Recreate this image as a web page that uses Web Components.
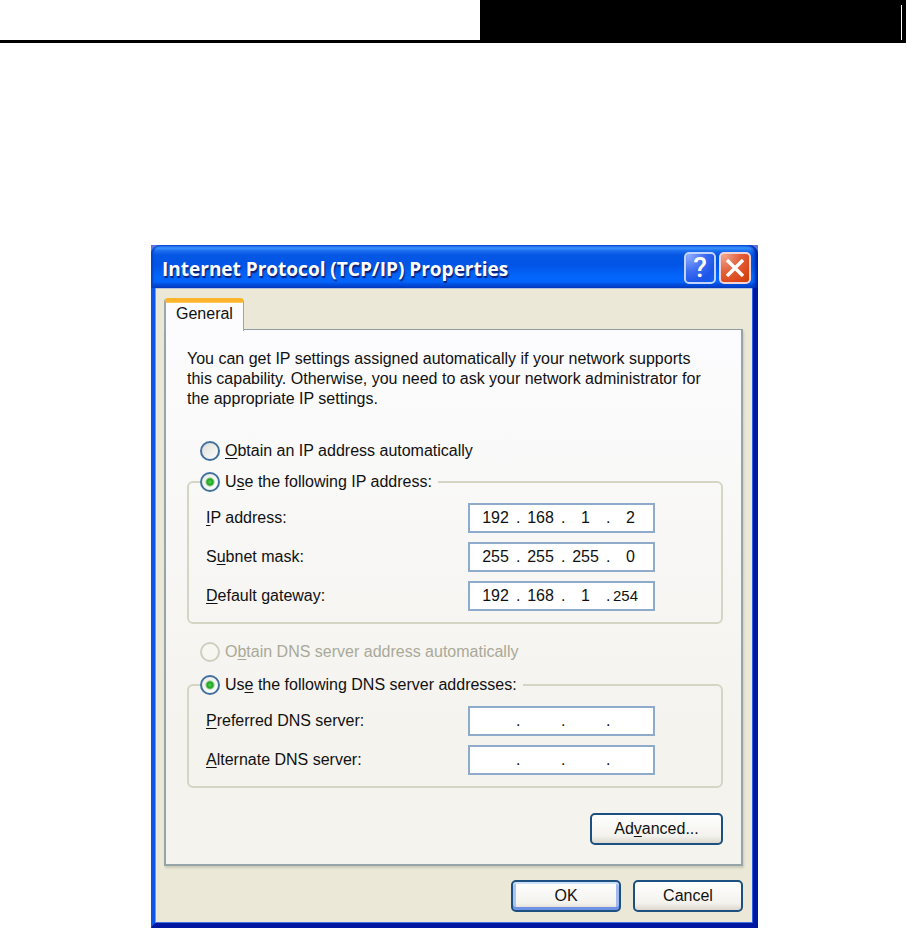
<!DOCTYPE html>
<html lang="en">
<head>
<meta charset="utf-8">
<title>Internet Protocol (TCP/IP) Properties</title>
<style>
  body {
    margin: 0;
    background: #fff;
    color: #111;
    font: 16px/20px "Liberation Sans", Arial, sans-serif;
  }
  main {
    padding: 202px 148px 0 151px;
  }
  p {
    margin: 0 0 32px 21px;
  }
  u {
    text-underline-offset: 2px;
  }
</style>
</head>
<body>
<page-header></page-header>
<main>
  <xp-dialog>
    <span slot="title">Internet Protocol (TCP/IP) Properties</span>
    <xp-tab-panel>
      <span slot="tab">General</span>
      <p>You can get IP settings assigned automatically if your network supports<br>this capability. Otherwise, you need to ask your network administrator for<br>the appropriate IP settings.</p>
      <xp-radio group="ip" class="loose"><u>O</u>btain an IP address automatically</xp-radio>
      <xp-group>
        <xp-radio slot="legend" group="ip" checked>U<u>s</u>e the following IP address:</xp-radio>
        <ip-field value="192.168.1.2"><u>I</u>P address:</ip-field>
        <ip-field value="255.255.255.0">S<u>u</u>bnet mask:</ip-field>
        <ip-field value="192.168.1.254"><u>D</u>efault gateway:</ip-field>
      </xp-group>
      <xp-radio group="dns" class="loose" disabled>O<u>b</u>tain DNS server address automatically</xp-radio>
      <xp-group>
        <xp-radio slot="legend" group="dns" checked>Us<u>e</u> the following DNS server addresses:</xp-radio>
        <ip-field value="..."><u>P</u>referred DNS server:</ip-field>
        <ip-field value="..."><u>A</u>lternate DNS server:</ip-field>
      </xp-group>
      <xp-button slot="actions" wide>Ad<u>v</u>anced...</xp-button>
    </xp-tab-panel>
    <xp-button slot="buttons" primary>OK</xp-button>
    <xp-button slot="buttons">Cancel</xp-button>
  </xp-dialog>
</main>

<script>
class PageHeader extends HTMLElement {
  constructor() {
    super();
    this.attachShadow({ mode: 'open' });
    this.shadowRoot.innerHTML = `
      <style>
        :host {
          display: grid;
          grid-template-columns: 53fr 47fr;
          border-bottom: 3px solid #000;
        }
        .band {
          display: flex;
          justify-content: flex-end;
          height: 35px;
          padding: 5px 4px 0 0;
          background: #000;
        }
        .mark {
          width: 1px;
          background: #fff;
        }
      </style>
      <div></div>
      <div class="band"><div class="mark"></div></div>
    `;
  }
}

class XpDialog extends HTMLElement {
  constructor() {
    super();
    this.attachShadow({ mode: 'open' });
    this.shadowRoot.innerHTML = `
      <style>
        :host {
          display: block;
          background: #5f74dc;
        }
        header {
          display: flex;
          align-items: center;
          gap: 3px;
          height: 43px;
          padding: 3px 7px 0 11px;
          box-sizing: border-box;
          border-radius: 9px 9px 0 0;
          background: linear-gradient(#0a4fd8 0, #3a93ff 3px, #1c6cf0 6px, #0557e4 10px, #0254e6 20px, #0366fd 32px, #0365fb 37px, #0150e0 39px, #003dc0 43px);
          box-shadow: inset 3px 0 2px -1px #0443cc, inset -4px 0 3px -1px #0022a8;
        }
        h1 {
          flex: 1;
          margin: 0;
          padding-top: 2px;
          color: #fff;
          font: bold 19px/24px "Open Sans", "Noto Sans", sans-serif;
          text-shadow: 1px 2px 1px #0a1f78;
        }
        header button {
          display: flex;
          align-items: center;
          justify-content: center;
          width: 32px;
          height: 32px;
          padding: 0;
          border: 2px solid #c3d3fa;
          border-radius: 5px;
          color: #fff;
          font: 500 28px/28px Roboto, sans-serif;
        }
        .help {
          background: radial-gradient(circle at 10% 5%, #8caaff, #3d6bf0 45%, #1c55e8 75%, #0d62f5);
        }
        .close {
          background: radial-gradient(circle at 10% 5%, #f2a48c, #e2603c 45%, #dc4a1c 75%, #c83a08);
          border-color: #f0d4d8;
        }
        .body {
          padding: 10px 10px 11px 9px;
          background: #ebe8d7;
          border: solid;
          border-width: 0 5px 5px 4px;
          border-color: #0831d9 #0018a0 #0018a0 #0b57e8;
          box-shadow: inset 1px 0 #7896d8, inset -1px 0 #2b62e4, inset 0 -1px #3f74de, inset 0 1px #b8c4dc;
        }
        footer {
          display: flex;
          justify-content: flex-end;
          gap: 12px;
          padding-top: 14px;
        }
      </style>
      <header>
        <h1><slot name="title"></slot></h1>
        <button class="help" type="button" aria-label="Help">?</button>
        <button class="close" type="button" aria-label="Close">
          <svg width="18" height="18" viewBox="0 0 18 18" fill="none" stroke="#fff" stroke-width="3.4"><path d="M1 1l16 16M17 1L1 17"/></svg>
        </button>
      </header>
      <div class="body">
        <slot></slot>
        <footer><slot name="buttons"></slot></footer>
      </div>
    `;
  }
}

class XpTabPanel extends HTMLElement {
  constructor() {
    super();
    this.attachShadow({ mode: 'open' });
    this.shadowRoot.innerHTML = `
      <style>
        :host {
          display: block;
        }
        .tab {
          position: relative;
          z-index: 1;
          width: max-content;
          padding: 2px 10px 7px;
          margin-bottom: -2px;
          background: #fcfcfe;
          border: 1px solid #9aa8ac;
          border-left-width: 2px;
          border-top: 4px solid #fdb52e;
          border-bottom: 0;
          border-radius: 4px 4px 0 0;
          box-shadow: inset 0 1px #fdc95e;
        }
        .panel {
          padding: 18px 18px 19px 0;
          border: 2px solid #98a5a8;
          border-top: 1px solid #8f9c9f;
          background: linear-gradient(#fcfcfe, #f4f3ee 75%, #f4f3ee);
          box-shadow: 1px 2px 2px #cbc9b8;
        }
        .actions {
          display: flex;
          justify-content: flex-end;
          padding-top: 25px;
        }
        ::slotted(p) {
          padding-top: 1px;
        }
        ::slotted(.loose) {
          margin-left: 34px;
        }
        ::slotted(xp-group) {
          margin: 11px 0 18px 21px;
        }
        ::slotted(xp-group:last-of-type) {
          margin: 13px 0 0 21px;
        }
      </style>
      <div class="tab"><slot name="tab"></slot></div>
      <div class="panel">
        <slot></slot>
        <div class="actions"><slot name="actions"></slot></div>
      </div>
    `;
  }
}

class XpGroup extends HTMLElement {
  constructor() {
    super();
    this.attachShadow({ mode: 'open' });
    this.shadowRoot.innerHTML = `
      <style>
        :host {
          display: block;
        }
        fieldset {
          margin: 0;
          min-width: 0;
          padding: 11px 66px 11px 17px;
          border: 2px solid #d4d5c3;
          border-radius: 6px;
        }
        legend {
          margin-left: -6px;
          padding: 0 6px 0 0;
        }
        .rows {
          display: grid;
          gap: 9px;
        }
      </style>
      <fieldset>
        <legend><slot name="legend"></slot></legend>
        <div class="rows"><slot></slot></div>
      </fieldset>
    `;
  }
}

class XpRadio extends HTMLElement {
  constructor() {
    super();
    this.attachShadow({ mode: 'open' });
    const checked = this.hasAttribute('checked') ? 'checked' : '';
    const disabled = this.hasAttribute('disabled') ? 'disabled' : '';
    this.shadowRoot.innerHTML = `
      <style>
        :host {
          display: block;
        }
        :host([disabled]) {
          color: #aaa998;
        }
        label {
          display: flex;
          gap: 5px;
          width: max-content;
        }
        input {
          appearance: none;
          width: 20px;
          height: 20px;
          margin: 0;
          border: 2px solid #41719f;
          border-radius: 50%;
          background: linear-gradient(135deg, #dcdcd6, #fff);
        }
        input:checked {
          background: radial-gradient(circle at 50% 50%, #4fd050 0, #22a422 3px, transparent 5px), linear-gradient(135deg, #eaeae4, #fff);
        }
        input:disabled {
          border-color: #cfcec0;
          background: #f7f6f1;
        }
      </style>
      <label><input type="radio" ${checked} ${disabled}><span><slot></slot></span></label>
    `;
    this.input = this.shadowRoot.querySelector('input');
    // Radios in separate shadow roots do not share a name, so clear the others here
    this.input.addEventListener('change', () => {
      const group = this.getAttribute('group');
      document.querySelectorAll(`xp-radio[group="${group}"]`).forEach((radio) => {
        if (radio !== this) radio.input.checked = false;
      });
    });
  }
}

class IpField extends HTMLElement {
  constructor() {
    super();
    this.attachShadow({ mode: 'open' });
    const octets = this.getAttribute('value').split('.');
    const inputs = octets.map((octet, i) => {
      const full = i === 3 && octet.length === 3 ? 'class="full"' : '';
      return `<input id="octet${i}" ${full} aria-label="Octet ${i + 1}" maxlength="3" value="${octet}">`;
    });
    this.shadowRoot.innerHTML = `
      <style>
        :host {
          display: grid;
          grid-template-columns: 1fr 187px;
          align-items: center;
        }
        .box {
          display: grid;
          grid-template-columns: 41px 4px 41px 4px 41px 4px 41px;
          align-items: center;
          height: 30px;
          padding-left: 5px;
          box-sizing: border-box;
          border: 2px solid #8fabcc;
          background: #fff;
        }
        input {
          width: 100%;
          padding: 0;
          border: 0;
          outline: 0;
          background: none;
          color: inherit;
          font: inherit;
          text-align: center;
        }
        .full {
          padding-left: 3px;
          box-sizing: border-box;
          font-size: 15px;
          text-align: left;
        }
      </style>
      <label for="octet0"><slot></slot></label>
      <div class="box">${inputs.join('<span>.</span>')}</div>
    `;
  }
}

class XpButton extends HTMLElement {
  constructor() {
    super();
    this.attachShadow({ mode: 'open' });
    this.shadowRoot.innerHTML = `
      <style>
        :host {
          display: block;
        }
        button {
          width: 110px;
          height: 32px;
          padding: 0;
          border: 2px solid #1c5080;
          border-radius: 5px;
          background: linear-gradient(#fff, #f3f2ed 75%, #dcd8cf);
          color: inherit;
          font: inherit;
        }
        :host([wide]) button {
          width: 133px;
        }
        :host([primary]) button {
          box-shadow: inset 0 2px #cfe0fb, inset 0 -3px #6f92e4, inset 3px 0 #a9c3f3, inset -3px 0 #a0baf0;
        }
      </style>
      <button type="button"><slot></slot></button>
    `;
  }
}

customElements.define('page-header', PageHeader);
customElements.define('xp-dialog', XpDialog);
customElements.define('xp-tab-panel', XpTabPanel);
customElements.define('xp-group', XpGroup);
customElements.define('xp-radio', XpRadio);
customElements.define('ip-field', IpField);
customElements.define('xp-button', XpButton);
</script>
</body>
</html>
